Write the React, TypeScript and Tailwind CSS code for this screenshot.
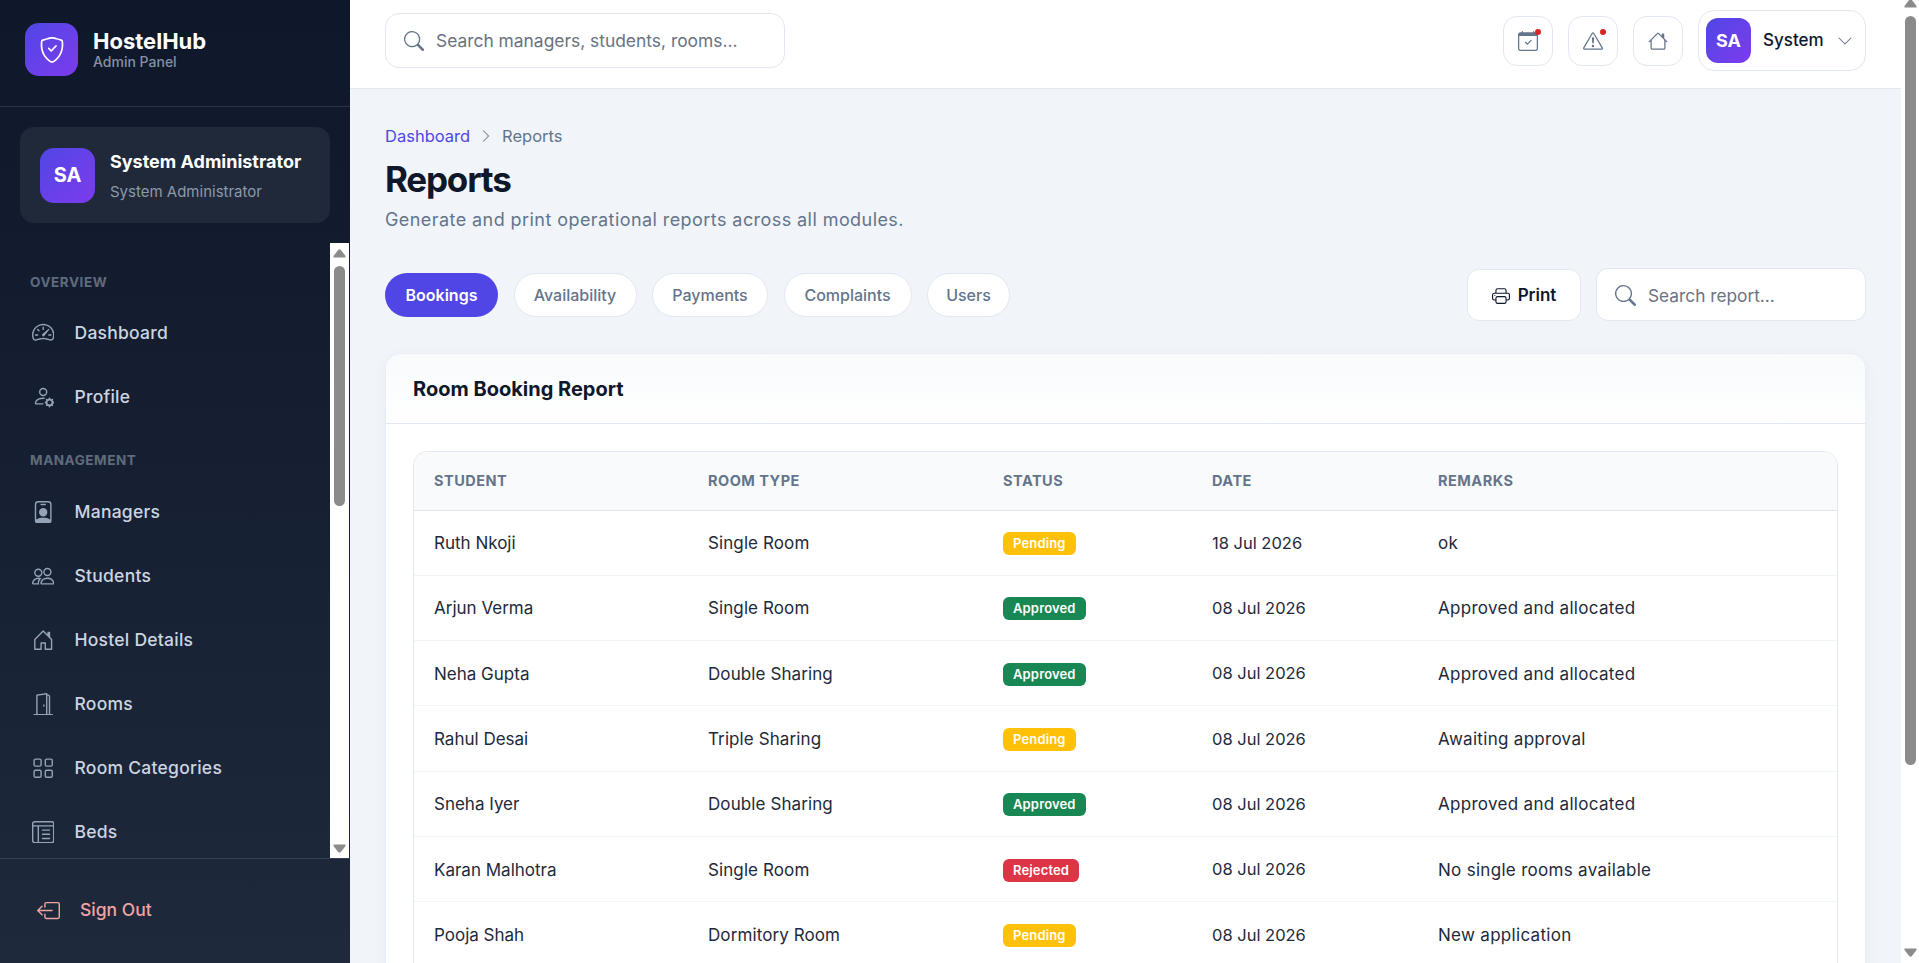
import React from "react";
import {
  BsShieldCheck, BsSpeedometer2, BsPersonGear, BsPersonBadge, BsPeople, BsHouseDoor, BsDoorOpen, BsGrid,
  BsLayoutTextWindowReverse, BsBoxArrowLeft, BsSearch, BsCalendarCheck, BsExclamationTriangle, BsHouse,
  BsChevronDown, BsChevronRight, BsPrinter,
} from "react-icons/bs";

type NavItem = { label: string; icon: React.ReactNode };

const overview: NavItem[] = [
  { label: "Dashboard", icon: <BsSpeedometer2 /> },
  { label: "Profile", icon: <BsPersonGear /> },
];
const management: NavItem[] = [
  { label: "Managers", icon: <BsPersonBadge /> },
  { label: "Students", icon: <BsPeople /> },
  { label: "Hostel Details", icon: <BsHouseDoor /> },
  { label: "Rooms", icon: <BsDoorOpen /> },
  { label: "Room Categories", icon: <BsGrid /> },
  { label: "Beds", icon: <BsLayoutTextWindowReverse /> },
];

function Arrow({ down, className }: { down?: boolean; className?: string }) {
  return (
    <svg viewBox="0 0 13 9" className={"h-[9px] w-[13px] shrink-0 " + (className ?? "")} fill="#8b8b8b">
      <path d={down ? "M0.5 0.5h12v1.5L7.5 8.5h-2L0.5 2z" : "M5.5 0.5h2L12.5 7v1.5h-12V7z"} />
    </svg>
  );
}

function NavRow({ item }: { item: NavItem }) {
  return (
    <div className="flex h-[64px] items-center pl-[31px] text-[#cbd5e1]">
      <span className="flex w-[24px] justify-center text-[22.4px] text-[#94a3b8]">{item.icon}</span>
      <span className="ml-[19.5px] text-[17.5px] font-medium leading-none tracking-[0.25px]">{item.label}</span>
    </div>
  );
}

function NavHeading({ children }: { children: React.ReactNode }) {
  return <div className="pl-[30px] text-[13.5px] font-bold leading-none tracking-[0.55px] text-[#5f6b7e]">{children}</div>;
}

function Sidebar() {
  return (
    <aside className="flex h-[963px] w-[350px] shrink-0 flex-col bg-linear-to-b from-[#0f172a] to-[#1e293b]">
      <div className="flex h-[107px] shrink-0 items-center gap-[15px] border-b border-[#2a3446] pb-[7px] pl-[25px]">
        <div className="flex h-[53px] w-[53px] items-center justify-center rounded-[14px] bg-linear-135 from-[#4f46e5] to-[#7c3aed] text-[26px] text-white">
          <BsShieldCheck />
        </div>
        <div className="flex flex-col">
          <span className="text-[22px] font-bold leading-[24px] text-white">HostelHub</span>
          <span className="text-[14px] font-medium leading-[17px] text-[#8591a3]">Admin Panel</span>
        </div>
      </div>
      <div className="shrink-0 px-[20px] pt-[20px] pb-[20px]">
        <div className="flex h-[96px] items-center gap-[15px] rounded-[14px] bg-[#202939] pl-[20px]">
          <div className="flex h-[55px] w-[55px] items-center justify-center rounded-[14px] bg-linear-135 from-[#4f46e5] to-[#7c3aed] text-[20px] font-bold text-white">SA</div>
          <div className="flex flex-col gap-[8px] pt-[2px]">
            <span className="text-[18px] font-bold leading-[24px] text-white">System Administrator</span>
            <span className="text-[15px] leading-[20px] text-[#8d98aa]">System Administrator</span>
          </div>
        </div>
      </div>
      <div className="flex min-h-0 flex-1 pr-[1px]">
        <nav className="min-w-0 flex-1 overflow-hidden pt-[33px]">
          <NavHeading>OVERVIEW</NavHeading>
          <div className="mt-[11px]">{overview.map((i) => <NavRow key={i.label} item={i} />)}</div>
          <div className="mt-[25px]"><NavHeading>MANAGEMENT</NavHeading></div>
          <div className="mt-[13px]">{management.map((i) => <NavRow key={i.label} item={i} />)}</div>
        </nav>
        <div className="flex w-[19px] shrink-0 flex-col items-center bg-white">
          <Arrow className="mt-[6px]" />
          <div className="mt-[8px] h-[240px] w-[11px] rounded-full bg-[#8b8b8b]" />
          <Arrow down className="mt-auto mb-[5px]" />
        </div>
      </div>
      <div className="flex h-[105px] shrink-0 items-center border-t border-[#334155] pb-[2px] pl-[37px] text-[#f0a3a3]">
        <BsBoxArrowLeft className="text-[23px]" />
        <span className="ml-[20px] text-[17.5px] font-medium">Sign Out</span>
      </div>
    </aside>
  );
}

function IconButton({ children, dot }: { children: React.ReactNode; dot?: boolean }) {
  return (
    <div className="relative flex h-[50px] w-[50px] items-center justify-center rounded-[14px] border border-[#e2e8f0] bg-white text-[20px] text-[#64748b]">
      {children}
      {dot && <span className="absolute top-[12px] right-[11px] h-[6px] w-[6px] rounded-full bg-[#dc2626]" />}
    </div>
  );
}

function Topbar() {
  return (
    <header className="flex h-[89px] shrink-0 items-center justify-between border-b border-[#e2e8f0] bg-white pr-[35px] pb-[7px] pl-[35px]">
      <div className="flex h-[55px] w-[400px] items-center rounded-[14px] border border-[#e2e8f0] bg-white pl-[18px]">
        <BsSearch className="text-[20px] text-[#64748b]" />
        <span className="ml-[12px] text-[17.4px] leading-none text-[#6b7280]">Search managers, students, rooms...</span>
      </div>
      <div className="flex items-center gap-[15px]">
        <IconButton dot><BsCalendarCheck /></IconButton>
        <IconButton dot><BsExclamationTriangle /></IconButton>
        <IconButton><BsHouse /></IconButton>
        <div className="flex h-[61px] w-[168px] items-center rounded-[16px] border border-[#e2e8f0] bg-white pl-[7px]">
          <div className="flex h-[45px] w-[45px] items-center justify-center rounded-[12px] bg-linear-135 from-[#4f46e5] to-[#7c3aed] text-[18px] font-bold text-white">SA</div>
          <span className="ml-[12px] text-[17px] font-medium text-[#0f172a]">System</span>
          <BsChevronDown className="ml-[13px] text-[16px] text-[#64748b]" />
        </div>
      </div>
    </header>
  );
}

const tabs = [
  { label: "Bookings", w: "w-[113px]" },
  { label: "Availability", w: "w-[123px]" },
  { label: "Payments", w: "w-[116px]" },
  { label: "Complaints", w: "w-[128px]" },
  { label: "Users", w: "w-[83px]" },
];

type Status = "Pending" | "Approved" | "Rejected";
const rows: [string, string, Status, string, string][] = [
  ["Ruth Nkoji", "Single Room", "Pending", "18 Jul 2026", "ok"],
  ["Arjun Verma", "Single Room", "Approved", "08 Jul 2026", "Approved and allocated"],
  ["Neha Gupta", "Double Sharing", "Approved", "08 Jul 2026", "Approved and allocated"],
  ["Rahul Desai", "Triple Sharing", "Pending", "08 Jul 2026", "Awaiting approval"],
  ["Sneha Iyer", "Double Sharing", "Approved", "08 Jul 2026", "Approved and allocated"],
  ["Karan Malhotra", "Single Room", "Rejected", "08 Jul 2026", "No single rooms available"],
  ["Pooja Shah", "Dormitory Room", "Pending", "08 Jul 2026", "New application"],
];

function Badge({ status }: { status: Status }) {
  const color = status === "Pending" ? "bg-[#ffc107]" : status === "Approved" ? "bg-[#198754]" : "bg-[#dc3545]";
  return <span className={"inline-flex h-[23px] items-center rounded-[6px] px-[10px] text-[13px] font-semibold leading-none tracking-[0.15px] text-white " + color}>{status}</span>;
}

function Content() {
  return (
    <div className="pr-[35px] pl-[35px]">
      <div className="flex items-center pt-[37px] text-[16.5px] leading-[20px]">
        <span className="text-[#4f46e5]">Dashboard</span>
        <BsChevronRight className="mx-[9px] text-[14px] text-[#64748b]" />
        <span className="text-[#64748b]">Reports</span>
      </div>
      <h1 className="mt-[10px] text-[35px] font-bold leading-[46px] tracking-[-1.2px] text-[#0f172a]">Reports</h1>
      <p className="mt-[4px] text-[18px] leading-[28px] tracking-[0.43px] text-[#64748b]">Generate and print operational reports across all modules.</p>
      <div className="mt-[34px] flex items-center justify-between">
        <div className="flex gap-[15.5px]">
          {tabs.map((t, i) => (
            <div key={t.label} className={"flex h-[44px] items-center justify-center rounded-full text-[16px] font-medium " + t.w + " " + (i === 0 ? "bg-[#4f46e5] font-semibold text-white" : "border border-[#e2e8f0] bg-white text-[#64748b]")}>{t.label}</div>
          ))}
        </div>
        <div className="flex items-center gap-[15px]">
          <div className="flex h-[52px] w-[114px] items-center justify-center gap-[8px] rounded-[12px] border border-[#e2e8f0] bg-white pt-[2px] text-[17px] font-semibold text-[#0f172a]">
            <BsPrinter className="text-[18px]" /> Print
          </div>
          <div className="flex h-[53px] w-[270px] items-center rounded-[12px] border border-[#e2e8f0] bg-white pt-[2px] pl-[18px]">
            <BsSearch className="text-[21px] text-[#64748b]" />
            <span className="ml-[12px] text-[17.3px] leading-none text-[#6b7280]">Search report...</span>
          </div>
        </div>
      </div>
      <section className="mt-[32px] overflow-hidden rounded-[16px] border border-[#e9eef4] bg-white shadow-[0_4px_16px_rgba(15,23,42,0.04)]">
        <div className="flex h-[70px] items-center border-b border-[#e2e8f0] bg-linear-to-b from-[#f8fafc] to-white pl-[27px] text-[20px] font-bold text-[#0f172a]">Room Booking Report</div>
        <div className="p-[27px]">
          <div className="overflow-hidden rounded-[14px] border border-[#e2e8f0] pb-[40px]">
            <table className="w-full table-fixed border-collapse text-left">
              <colgroup>
                <col className="w-[274px]" />
                <col className="w-[295px]" />
                <col className="w-[209px]" />
                <col className="w-[226px]" />
                <col />
              </colgroup>
              <thead>
                <tr className="h-[58px] border-b border-[#e2e8f0] bg-[#f8fafc] text-[14.5px] tracking-[0.5px] text-[#64748b]">
                  {["STUDENT", "ROOM TYPE", "STATUS", "DATE", "REMARKS"].map((h) => <th key={h} className="pl-[20px] font-bold">{h}</th>)}
                </tr>
              </thead>
              <tbody>
                {rows.map((r, i) => (
                  <tr key={i} className="h-[65.33px] border-b border-[#f1f5f9] text-[#1e293b]">
                    <td className="pt-[2px] pl-[20px] text-[17px]">{r[0]}</td>
                    <td className="pt-[2px] pl-[20px] text-[17px] tracking-[0.1px]">{r[1]}</td>
                    <td className="pl-[20px]"><Badge status={r[2]} /></td>
                    <td className="pt-[1px] pl-[20px] text-[16.5px]">{r[3]}</td>
                    <td className="pt-[2px] pl-[20px] text-[17px] tracking-[0.3px]">{r[4]}</td>
                  </tr>
                ))}
              </tbody>
            </table>
          </div>
        </div>
      </section>
    </div>
  );
}

export default function App() {
  return (
    <div className="flex h-[963px] overflow-hidden bg-[#f1f5f9] font-['Inter',sans-serif]">
      <Sidebar />
      <main className="h-[963px] min-w-0 flex-1 overflow-hidden">
        <Topbar />
        <Content />
      </main>
      <div className="flex h-[963px] w-[18px] shrink-0 flex-col items-center bg-white">
        <Arrow className="-mt-[1px]" />
        <div className="mt-[8px] h-[749px] w-[11px] rounded-full bg-[#8b8b8b]" />
        <Arrow down className="mt-auto mb-[6px]" />
      </div>
    </div>
  );
}
